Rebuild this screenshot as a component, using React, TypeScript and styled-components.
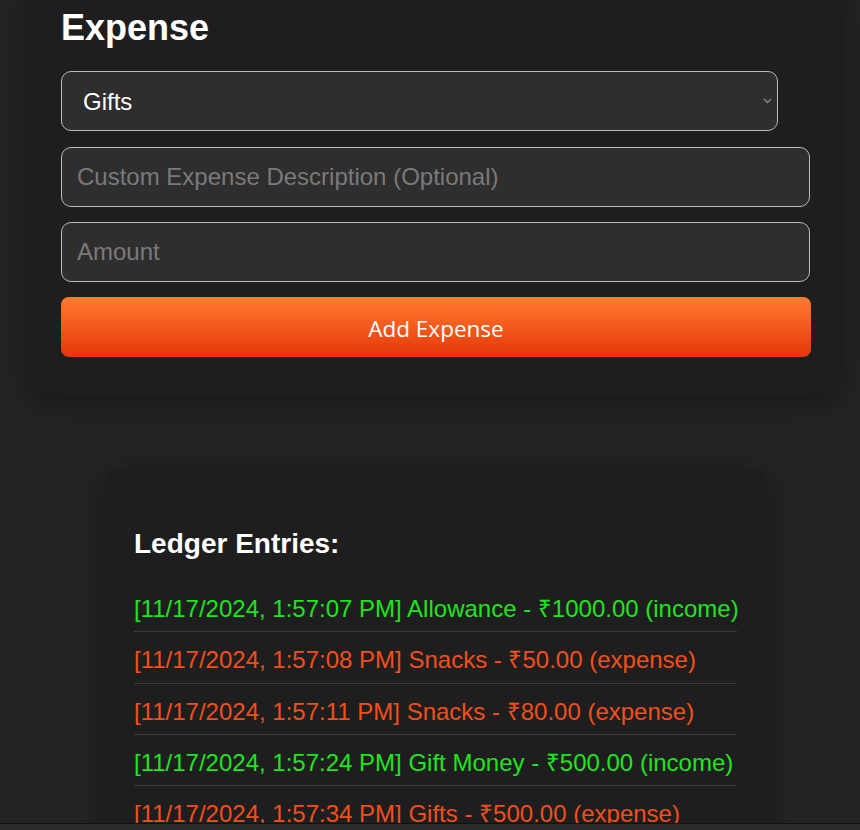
import styled, { createGlobalStyle } from 'styled-components';

const GlobalStyle = createGlobalStyle`
  html, body {
    margin: 0;
    padding: 0;
    background: #232323;
    font-family: 'Liberation Sans', Arial, sans-serif;
    color: #fff;
  }
`;

const Page = styled.div`
  height: 100vh;
  overflow: hidden;
  background: #232323;
`;

const FormCard = styled.section`
  margin: -23px 0 0 30px;
  width: 810px;
  box-sizing: border-box;
  padding: 30px 29px 38px 31px;
  background: #1e1e1e;
  border-radius: 25px;
  box-shadow: 0 6px 30px rgba(0, 0, 0, 0.35);
`;

const Title = styled.h2`
  margin: 0 0 23px;
  font-size: 36px;
  font-weight: 700;
  line-height: 41px;
  color: #fff;
`;

const Field = styled.input`
  display: block;
  width: 749px;
  height: 60px;
  box-sizing: border-box;
  margin: 0 0 15px;
  padding: 0 15px;
  font-family: 'Liberation Sans', Arial, sans-serif;
  font-size: 24px;
  color: #fff;
  background: #2e2e2e;
  border: 1px solid #b9b9b9;
  border-radius: 10px;
  outline: none;

  &::placeholder {
    color: #7a7a7a;
  }
`;

const SelectWrap = styled.div`
  position: relative;
  width: 717px;
  margin-bottom: 16px;
`;

const Select = styled.select`
  display: block;
  width: 100%;
  height: 60px;
  box-sizing: border-box;
  padding: 0 21px;
  font-family: 'Liberation Sans', Arial, sans-serif;
  font-size: 24px;
  color: #fff;
  background: #2e2e2e;
  border: 1px solid #b9b9b9;
  border-radius: 10px;
  appearance: none;
  outline: none;
`;

const Chevron = styled.svg`
  position: absolute;
  right: 6px;
  top: 27px;
  pointer-events: none;
`;

const AddButton = styled.button`
  display: block;
  width: 750px;
  height: 60px;
  padding: 2px 0 0;
  border: none;
  border-radius: 8px;
  background: linear-gradient(180deg, #ff7b32 0%, #f25a1c 50%, #e4360a 100%);
  color: #fff;
  font-family: 'Open Sans', 'Noto Sans', sans-serif;
  font-size: 22.5px;
  cursor: pointer;
`;

const LedgerCard = styled.section`
  margin: 75px 0 0 105px;
  width: 662px;
  box-sizing: border-box;
  padding: 58px 30px 40px 29px;
  background: #1e1e1e;
  border-radius: 16px;
  box-shadow: 0 6px 30px rgba(0, 0, 0, 0.3);
`;

const LedgerTitle = styled.h3`
  margin: 0 0 21px;
  font-size: 28px;
  font-weight: 700;
  line-height: 32px;
  color: #fff;
`;

const EntryList = styled.ul`
  list-style: none;
  margin: 0;
  padding: 0;
`;

const Entry = styled.li<{ $kind: 'income' | 'expense' }>`
  padding: 14px 0 8.3px;
  font-size: 24px;
  line-height: 28px;
  white-space: nowrap;
  color: ${(p) => (p.$kind === 'income' ? '#1fe51f' : '#f24f1c')};
  border-bottom: 1px solid #3a3a3a;
`;

const BottomBar = styled.div`
  position: fixed;
  left: 0;
  right: 0;
  bottom: 0;
  height: 6px;
  background: #2a2a2a;
  border-top: 1px solid #111;
`;

const entries: { time: string; label: string; amount: string; kind: 'income' | 'expense' }[] = [
  { time: '11/17/2024, 1:57:07 PM', label: 'Allowance', amount: '1000.00', kind: 'income' },
  { time: '11/17/2024, 1:57:08 PM', label: 'Snacks', amount: '50.00', kind: 'expense' },
  { time: '11/17/2024, 1:57:11 PM', label: 'Snacks', amount: '80.00', kind: 'expense' },
  { time: '11/17/2024, 1:57:24 PM', label: 'Gift Money', amount: '500.00', kind: 'income' },
  { time: '11/17/2024, 1:57:34 PM', label: 'Gifts', amount: '500.00', kind: 'expense' },
];

export default function App() {
  return (
    <Page>
      <GlobalStyle />
      <FormCard>
        <Title>Expense</Title>
        <SelectWrap>
          <Select defaultValue="Gifts">
            <option>Snacks</option>
            <option>Gifts</option>
            <option>Books</option>
          </Select>
          <Chevron width="9" height="6" viewBox="0 0 9 6">
            <path d="M1 1l3.5 3.5L8 1" fill="none" stroke="#8a8a8a" strokeWidth="1.3" />
          </Chevron>
        </SelectWrap>
        <Field placeholder="Custom Expense Description (Optional)" />
        <Field placeholder="Amount" />
        <AddButton>Add Expense</AddButton>
      </FormCard>

      <LedgerCard>
        <LedgerTitle>Ledger Entries:</LedgerTitle>
        <EntryList>
          {entries.map((e) => (
            <Entry key={e.time} $kind={e.kind}>
              [{e.time}] {e.label} - ₹{e.amount} ({e.kind})
            </Entry>
          ))}
        </EntryList>
      </LedgerCard>
      <BottomBar />
    </Page>
  );
}
